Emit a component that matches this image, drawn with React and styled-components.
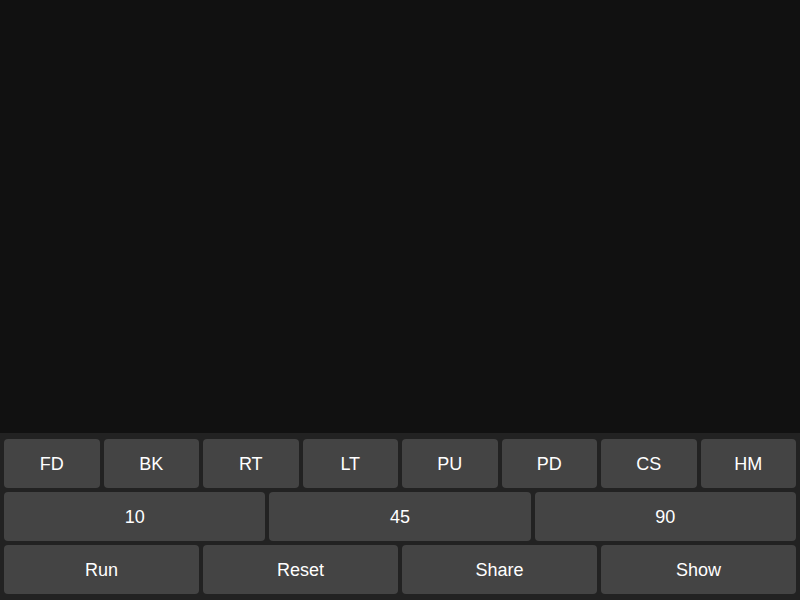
import React from "react";
import styled, { createGlobalStyle } from "styled-components";

const commands = ["FD", "BK", "RT", "LT", "PU", "PD", "CS", "HM"];
const numbers = ["10", "45", "90"];
const actions = ["Run", "Reset", "Share", "Show"];

const GlobalStyle = createGlobalStyle`
  html, body {
    margin: 0;
    padding: 0;
    height: 100%;
    background: #111111;
    font-family: "Liberation Sans", Arial, sans-serif;
  }
  #root {
    height: 100%;
  }
`;

const App = () => {
  return (
    <>
      <GlobalStyle />
      <Page>
        <Canvas />
        <Panel>
          <Row $cols={commands.length}>
            {commands.map((c) => (
              <Key key={c}>{c}</Key>
            ))}
          </Row>
          <Row $cols={numbers.length}>
            {numbers.map((n) => (
              <Key key={n}>{n}</Key>
            ))}
          </Row>
          <Row $cols={actions.length}>
            {actions.map((a) => (
              <Key key={a}>{a}</Key>
            ))}
          </Row>
        </Panel>
      </Page>
    </>
  );
};

const Page = styled.div`
  display: flex;
  flex-direction: column;
  height: 600px;
  width: 800px;
`;

const Canvas = styled.div`
  flex: 1;
  background: #111111;
`;

const Panel = styled.div`
  background: #222222;
  padding: 6px 4px;
  display: flex;
  flex-direction: column;
  gap: 4px;
`;

const Row = styled.div`
  display: grid;
  grid-template-columns: repeat(${(p) => p.$cols}, 1fr);
  gap: 4px;
`;

const Key = styled.button`
  height: 49px;
  background: #444444;
  color: #ffffff;
  border: none;
  border-radius: 4px;
  font-family: "Liberation Sans", Arial, sans-serif;
  font-size: 18px;
  padding: 2px 0 0;
  cursor: pointer;
`;

export default App;
